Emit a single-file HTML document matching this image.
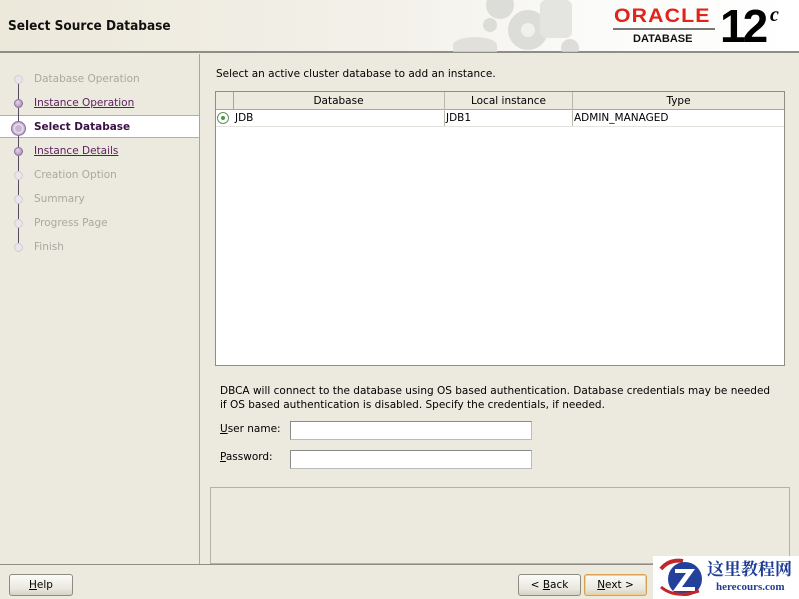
<!DOCTYPE html>
<html><head><style>
*{margin:0;padding:0;box-sizing:border-box}
body{width:799px;height:599px;overflow:hidden;background:#ece9de;font-family:"DejaVu Sans","Liberation Sans",sans-serif;font-size:10.5px;color:#000;position:relative}
.abs{position:absolute}
#hdr{left:0;top:0;width:799px;height:53px;background:linear-gradient(90deg,#ece8da 0%,#f3f1ea 50%,#fbfbf9 75%,#fff 100%);border-bottom:2px solid #8e8d86}
#title{left:8px;top:18px;font-size:13.5px;font-weight:bold;font-family:"DejaVu Sans Condensed","DejaVu Sans",sans-serif;color:#111}
#left{left:0;top:54px;width:200px;height:510px;border-right:1px solid #a8a79f}
.step{position:absolute;left:34px;font-size:10.5px;color:#aaa8a0}
.step.link{color:#5b1e5e;text-decoration:underline}
.dot{position:absolute;left:14px;width:9px;height:9px;border-radius:50%;background:#e8e6ea;border:1px solid #cfcdd4}
.dot.on{background:radial-gradient(circle at 40% 35%,#e6d8ea,#9b7aa8);border-color:#8f74a0}
#sel{left:0;top:115px;width:199px;height:23px;background:#fff;border-top:1px solid #b3b2aa;border-bottom:1px solid #b3b2aa}
.inp{position:absolute;height:19px;background:#fff;border:1px solid #7f9db9;border-color:#8b8b8b #bbb #bbb #8b8b8b}
.btn{position:absolute;height:22px;border:1px solid #8e8b80;border-radius:3px;background:linear-gradient(#fbfbf8,#e9e7de 70%,#d4d1c6);text-align:center;line-height:20px;font-size:10.5px}
</style></head><body>
<div id="hdr" class="abs"></div>
<svg class="abs" style="left:440px;top:0" width="150" height="52">
<g fill="#d6d6d3" opacity=".8">
<circle cx="60" cy="5" r="14"/><circle cx="88" cy="30" r="20"/><circle cx="50" cy="25" r="7"/>
<rect x="100" y="0" width="32" height="38" rx="6" fill="#e0e0dc"/>
<ellipse cx="35" cy="45" rx="22" ry="8" fill="#dcdcd8"/><rect x="13" y="45" width="44" height="8" fill="#dcdcd8"/>
<circle cx="130" cy="48" r="9"/></g>
<circle cx="88" cy="30" r="7" fill="#f0f0ee"/></svg>
<div class="abs" style="left:614px;top:6px;font:bold 19px 'Liberation Sans',sans-serif;color:#e0241b;letter-spacing:1px;transform:scaleX(1.12);transform-origin:left">ORACLE</div>
<div class="abs" style="left:613px;top:28px;width:102px;height:2px;background:#777"></div>
<div class="abs" style="left:633px;top:33px;font:bold 11px 'Liberation Sans',sans-serif;color:#111">DATABASE</div>
<div class="abs" style="left:720px;top:2px;font:bold 46px 'Liberation Sans',sans-serif;color:#000;letter-spacing:-3px;line-height:48px">12</div>
<div class="abs" style="left:770px;top:4px;font:italic bold 20px 'Liberation Serif',serif;color:#000">c</div>
<div id="title" class="abs">Select Source Database</div>

<div id="left" class="abs"></div>
<div id="sel" class="abs"></div>
<div class="abs" style="left:18px;top:80px;width:1px;height:168px;background:#5a4a60"></div>
<div class="dot" style="top:75px"></div><div class="step" style="top:73px">Database Operation</div>
<div class="dot on" style="top:99px"></div><div class="step link" style="top:97px">Instance Operation</div>
<div class="dot on" style="top:121px;left:11px;width:15px;height:15px;background:radial-gradient(circle,#c9b6d4 35%,#efe9f2 45%,#b59cc2 70%)"></div><div class="step" style="top:121px;color:#3a0f45;font-weight:bold">Select Database</div>
<div class="dot on" style="top:147px"></div><div class="step link" style="top:145px">Instance Details</div>
<div class="dot" style="top:171px"></div><div class="step" style="top:169px">Creation Option</div>
<div class="dot" style="top:195px"></div><div class="step" style="top:193px">Summary</div>
<div class="dot" style="top:219px"></div><div class="step" style="top:217px">Progress Page</div>
<div class="dot" style="top:243px"></div><div class="step" style="top:241px">Finish</div>

<div class="abs" style="left:216px;top:68px">Select an active cluster database to add an instance.</div>
<div class="abs" style="left:215px;top:91px;width:570px;height:275px;background:#fff;border:1px solid #8e8d86"></div>
<div class="abs" style="left:216px;top:92px;width:568px;height:18px;background:#ece9de;border-bottom:1px solid #a8a79f"></div>
<div class="abs" style="left:233px;top:92px;width:1px;height:18px;background:#a8a79f"></div>
<div class="abs" style="left:444px;top:92px;width:1px;height:34px;background:#b8b7b0"></div>
<div class="abs" style="left:572px;top:92px;width:1px;height:34px;background:#b8b7b0"></div>
<div class="abs" style="left:216px;top:126px;width:568px;height:1px;background:#e4e3de"></div>
<div class="abs" style="left:233px;top:95px;width:211px;text-align:center">Database</div>
<div class="abs" style="left:445px;top:95px;width:127px;text-align:center">Local instance</div>
<div class="abs" style="left:573px;top:95px;width:211px;text-align:center">Type</div>
<div class="abs" style="left:217px;top:112px;width:12px;height:12px;border-radius:50%;border:1px solid #6d8a6d;background:#fff"></div>
<div class="abs" style="left:221px;top:116px;width:4px;height:4px;border-radius:50%;background:#3aa23a"></div>
<div class="abs" style="left:235px;top:112px">JDB</div>
<div class="abs" style="left:446px;top:112px">JDB1</div>
<div class="abs" style="left:574px;top:112px">ADMIN_MANAGED</div>

<div class="abs" style="left:220px;top:384px;line-height:14px;white-space:nowrap">DBCA will connect to the database using OS based authentication. Database credentials may be needed<br>if OS based authentication is disabled. Specify the credentials, if needed.</div>
<div class="abs" style="left:220px;top:423px"><u>U</u>ser name:</div>
<div class="inp" style="left:290px;top:421px;width:242px"></div>
<div class="abs" style="left:220px;top:451px"><u>P</u>assword:</div>
<div class="inp" style="left:290px;top:450px;width:242px"></div>

<div class="abs" style="left:210px;top:487px;width:580px;height:77px;border:1px solid #b3b2aa"></div>
<div class="abs" style="left:0;top:564px;width:799px;height:1px;background:#8e8d86"></div>

<div class="btn" style="left:9px;top:574px;width:64px"><u>H</u>elp</div>
<div class="btn" style="left:518px;top:574px;width:63px">&lt; <u>B</u>ack</div>
<div class="btn" style="left:584px;top:574px;width:63px;border-color:#d8a24e;box-shadow:inset 0 0 0 1px #f5cf8a"><u>N</u>ext &gt;</div>

<div class="abs" style="left:653px;top:556px;width:146px;height:43px;background:#fff"></div>
<svg class="abs" style="left:655px;top:557px" width="50" height="42">
<path d="M6 12 Q14 2 28 4" stroke="#c0282a" stroke-width="4" fill="none"/>
<circle cx="30" cy="22" r="17" fill="#23409a"/>
<path d="M20 12h20l-13 18h13v4H18l13-18H20z" fill="#fff"/>
<path d="M6 30 Q20 42 44 34" stroke="#c0282a" stroke-width="3" fill="none"/></svg>
<div class="abs" style="left:707px;top:558px;font:bold 17px 'Noto Serif CJK SC','Noto Sans CJK SC',serif;color:#1f3d96;line-height:20px">这里教程网</div>
<div class="abs" style="left:716px;top:581px;font:bold 11px 'Liberation Serif',serif;color:#1f3d96">herecours.com</div>
</body></html>
